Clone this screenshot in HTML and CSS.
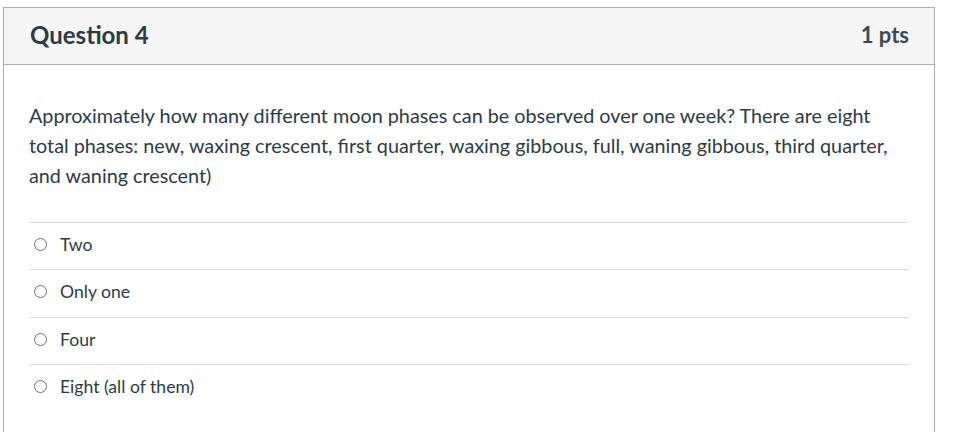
FILE: index.html
```html
<!DOCTYPE html>
<html>
<head>
<meta charset="utf-8">
<link rel="stylesheet" href="styles.css">
</head>
<body>
<div class="card">
  <div class="card-header">
    <span class="title">Question 4</span>
    <span class="pts">1 pts</span>
  </div>
  <div class="card-body">
    <p class="question">Approximately how many different moon phases can be observed over one week? There are eight total phases: new, waxing crescent, first quarter, waxing gibbous, full, waning gibbous, third quarter, and waning crescent)</p>
    <div class="answers">
      <label class="answer"><span class="radio"></span><span>Two</span></label>
      <label class="answer"><span class="radio"></span><span>Only one</span></label>
      <label class="answer"><span class="radio"></span><span>Four</span></label>
      <label class="answer"><span class="radio"></span><span>Eight (all of them)</span></label>
    </div>
  </div>
</div>
</body>
</html>
```
FILE: styles.css
```css
html, body {
  margin: 0;
  padding: 0;
  background: #ffffff;
}
body {
  font-family: Lato, "Liberation Sans", sans-serif;
  color: #2d3b45;
}
.card {
  margin: 7px 0 0 3px;
  width: 932px;
  box-sizing: border-box;
  border: 1px solid #adadad;
  border-bottom: none;
  height: 440px;
}
.card-header {
  display: flex;
  justify-content: space-between;
  align-items: center;
  background: #f5f5f5;
  height: 57px;
  box-sizing: border-box;
  border-bottom: 1px solid #adadad;
  padding: 0 25px 3px 26px;
}
.title {
  font-size: 24px;
  font-weight: 700;
}
.pts {
  font-size: 22px;
  font-weight: 700;
  color: #3d4a54;
}
.card-body {
  padding: 35px 25px 0 25px;
}
.question {
  margin: 0;
  font-size: 19.8px;
  line-height: 30px;
}
.answers {
  margin-top: 32px;
}
.answer {
  display: flex;
  align-items: center;
  gap: 13px;
  height: 43.33px;
  box-sizing: content-box;
  border-top: 1px solid #dcdcdc;
  padding: 0 0 3px 5px;
  font-size: 17.6px;
}
.radio {
  width: 11px;
  height: 11px;
  border: 1.5px solid #707070;
  border-radius: 50%;
}
```
